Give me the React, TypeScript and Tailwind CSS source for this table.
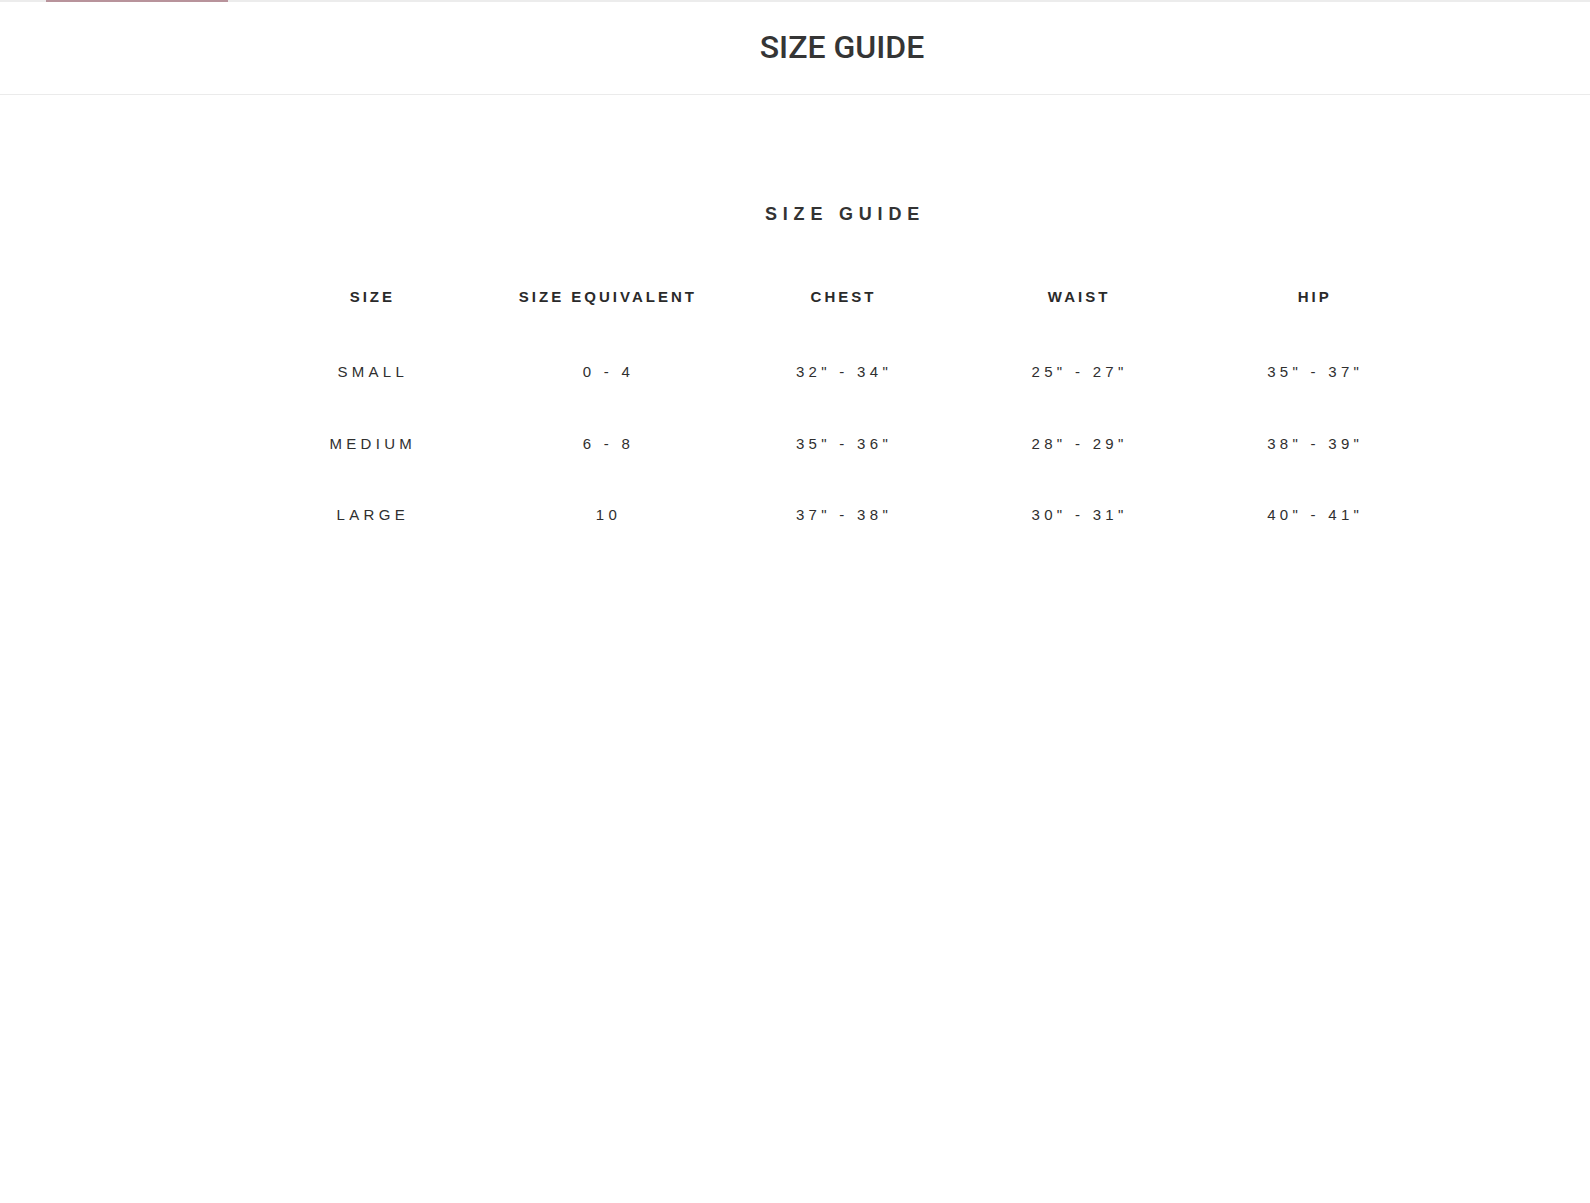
const headers: string[] = ["SIZE", "SIZE EQUIVALENT", "CHEST", "WAIST", "HIP"];

const rows: string[][] = [
  ["SMALL", "0 - 4", "32\" - 34\"", "25\" - 27\"", "35\" - 37\""],
  ["MEDIUM", "6 - 8", "35\" - 36\"", "28\" - 29\"", "38\" - 39\""],
  ["LARGE", "10", "37\" - 38\"", "30\" - 31\"", "40\" - 41\""],
];

const App = () => {
  return (
    <div className="min-h-screen w-full bg-white">
      {/* loading bar */}
      <div className="h-[2px] w-full bg-[#ececec]">
        <div className="ml-[46px] h-full w-[182px] bg-[#b8939b]"></div>
      </div>

      <header className="flex h-[93px] items-center justify-center border-b border-[#ebebeb] pb-[3px] pl-[94px]">
        <h1 className="font-['Roboto',sans-serif] text-[32px] font-medium leading-none text-[#353535]">
          SIZE GUIDE
        </h1>
      </header>

      <section className="pl-[94px] font-['Liberation_Sans',Arial,sans-serif]">
        <h2 className="mt-[110px] pl-[6px] text-center text-[18px] font-bold leading-none tracking-[5.8px] text-[#333333]">
          SIZE GUIDE
        </h2>

        <div className="mx-auto mt-[66px] w-[1178px]">
          <div className="mb-[60px] grid grid-cols-5">
            {headers.map((h, i) => (
              <div
                key={i}
                className="pl-[3px] text-center text-[15px] font-bold leading-none tracking-[3px] text-[#2a2a2a]"
              >
                {h}
              </div>
            ))}
          </div>

          <div className="flex flex-col gap-[56.5px]">
            {rows.map((row, r) => (
              <div key={r} className="grid grid-cols-5">
                {row.map((cell, c) => (
                  <div
                    key={c}
                    className="pl-[4px] text-center text-[15px] font-medium leading-none tracking-[4.3px] text-[#2f2f2f]"
                  >
                    {cell}
                  </div>
                ))}
              </div>
            ))}
          </div>
        </div>
      </section>
    </div>
  );
};

export default App;
